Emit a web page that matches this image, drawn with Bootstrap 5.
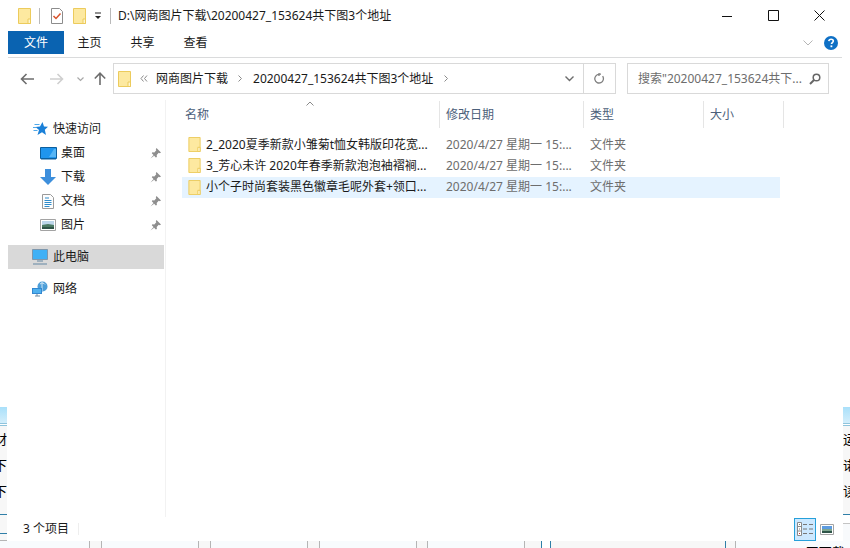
<!DOCTYPE html>
<html lang="zh-CN">
<head>
  <meta charset="UTF-8">
  <title>20200427_153624共下图3个地址</title>
  <link href="https://cdn.jsdelivr.net/npm/bootstrap@5.3.3/dist/css/bootstrap.min.css" rel="stylesheet">
  <style>
    html, body { width: 850px; height: 548px; overflow: hidden; background: #fff; }
    body { font: 12px/16px "Noto Sans", "Noto Sans CJK SC", sans-serif; color: #1a1a1a; }
    svg { display: block; flex: none; }

    .gap-l-4 { margin-left: 4px; }
    .gap-l-5 { margin-left: 5px; }
    .gap-l-7 { margin-left: 7px; }
    .gap-l-8 { margin-left: 8px; }
    .gap-l-9 { margin-left: 9px; }
    .gap-l-10 { margin-left: 10px; }
    .gap-l-11 { margin-left: 11px; }

    .shell { height: 541px; }
    .edge { width: 7px; flex: none; overflow: hidden; }
    .edge-top { height: 407px; background: #fff; }
    .edge-glow { height: 16px; background: linear-gradient(#a9e0fa, #d4eefb); }
    .edge-rule { height: 3px; background: #fff; border-top: 1px solid #8fc4dc; border-bottom: 1px solid #8fc4dc; }
    .edge-body { height: 88px; background: #f7f7f7; font-size: 13px; color: #000; white-space: nowrap; }
    .edge-body div { height: 26px; padding-top: 5px; }
    .edge-left .edge-body div { direction: rtl; }
    .edge-foot-l { height: 19px; background: #f7f7f7; border-top: 1px solid #2f7fa8; }
    .edge-foot-l2 { height: 8px; background: #f7f7f7; border-top: 1px solid #2f7fa8; border-bottom: 1px solid #b5b5b5; }
    .edge-foot-r { height: 9px; background: #fff; border-top: 1px solid #2f7fa8; }
    .edge-foot-r2 { height: 18px; background: #f8fafc; border-top: 1px solid #c4c4c4; }

    .win { width: 836px; flex: none; background: #fff; }
    .titlebar { height: 31px; }
    .bar-sep { width: 1px; height: 16px; background: #b9b9b9; }
    .win-btns { margin-right: 1px; }
    .win-btn { width: 46px; height: 31px; }

    .ribbon { height: 27px; margin: 0 1px; border-bottom: 1px solid #dadbdc; }
    .file-tab { width: 56px; height: 23px; margin-bottom: 3px; background: #0a63b1; color: #fff; }
    .rib-tab { width: 53px; height: 23px; margin: 0 0 3px -1px; text-align: center; line-height: 23px; }
    .rib-tab-first { margin-left: -1px; }
    .rib-fold { margin: 0 11px 3px auto; }
    .rib-help { margin: 0 4px 3px 0; }

    .addr { height: 42px; padding-top: 5px; }
    .addr-box { height: 31px; border: 1px solid #d9d9d9; }
    .path { width: 503px; margin-left: 7px; }
    .find { width: 202px; margin-left: 11px; color: #6d6d6d; }
    .addr-sep { width: 1px; height: 29px; background: #d9d9d9; }
    .go-back { margin: 10px 0 0 13px; }
    .go-next { margin: 10px 0 0 16px; }
    .go-list { margin: 14px 0 0 13px; }
    .go-up { margin: 9px 0 0 10px; }
    .path-fold { margin-right: 9px; }
    .path-refresh { margin: 0 10px; }
    .find-glass { margin-right: 7px; }

    .mainpane { height: 417px; }
    .sidenav { width: 159px; padding-top: 17px; border-right: 1px solid #f2f2f2; margin-right: 16px; flex: none; }
    .nav-row { height: 24px; margin-left: 1px; width: 156px; }
    .nav-on { background: #d9d9d9; margin-top: 8px; }
    .nav-net { margin-top: 8px; }
    .ico-star { margin-left: 25px; }
    .ico-desk { margin-left: 32px; }
    .ico-doc { margin-left: 34px; }
    .ico-top { margin-left: 24px; }
    .nav-pin { margin: 0 3px 0 auto; }

    .heads { height: 27px; margin-top: 1px; color: #4c607a; }
    .cell-name { width: 256px; flex: none; }
    .cell-date { width: 144px; flex: none; }
    .cell-type { width: 120px; flex: none; }
    .cell-size { width: 80px; flex: none; }
    .heads > div { height: 27px; line-height: 28px; border-right: 1px solid #e5e5e5; padding-left: 6px; position: relative; }
    .heads .cell-name { padding-left: 3px; width: 258px; }
    .sort-mark { position: absolute; left: 124px; top: 0; }
    .filelist { margin-top: 6px; width: 598px; }
    .file-row { height: 21.33px; line-height: 20px; }
    .file-row .cell-name { padding-left: 6px; white-space: nowrap; overflow: hidden; }
    .file-row .cell-date, .file-row .cell-type { color: #6d6d6d; padding-left: 8px; white-space: nowrap; }
    .file-ico { margin-right: 5px; }
    .file-on { background: #e5f3ff; }

    .statusbar { height: 24px; }
    .status-text { margin-left: 16px; }
    .status-sep { width: 1px; height: 12px; background: #eee; margin-left: 9px; }
    .view-on { width: 22px; height: 23px; margin-left: auto; background: #cce8ff; border: 1px solid #26a0da; }
    .view-big { margin: 0 9px 0 4px; }

    .band { height: 7px; background: #f8fbfd; overflow: hidden; }
    .band-space { flex: none; height: 7px; }
    .w-89 { width: 89px; }
    .w-96 { width: 96px; }
    .w-52 { width: 8px; background: #fff; }
    .w-175 { width: 175px; background: #f7f7f7; border-left: 1px solid #2f7fa8; }
    .band-gap { height: 7px; width: 13px; background: #f7f7f7; border-left: 1px solid #b5b5b5; border-right: 1px solid #b5b5b5; flex: none; }
    .band-gap-12 { width: 12px; }
    .band-gap-18 { width: 18px; border-right-color: #2f7fa8; }
    .band-gap-11 { width: 11px; border-left-color: #2f7fa8; }
    .band-text { font-size: 13px; line-height: 16px; margin-left: 59px; padding-top: 3px; color: #000; white-space: nowrap; }
  </style>
</head>
<body>
  <svg width="0" height="0" class="position-absolute">
    <symbol id="folder" viewBox="0 0 13 16">
      <path d="M.5.5h12v15H.5z" fill="#fde9a0" stroke="#eccb5c"/>
      <path d="M10 11h2.5v4.500H10z" fill="#fff6d0" stroke="#eccb5c"/>
    </symbol>
    <symbol id="pin" viewBox="0 0 11 11">
      <path d="M6.500 0 11 4.500 9.800 5.200 8.700 4.800 6.700 7 6.900 9 5.800 9.500 1.800 5.300 2.400 4.300 4.300 4.400 6.300 2.300 5.800 1.200z" fill="#8e8e8e"/>
      <path d="M3.500 7 .5 10.500 4.200 7.800z" fill="#8e8e8e"/>
    </symbol>
  </svg>

  <div class="shell d-flex">
    <div class="edge edge-left">
      <div class="edge-top"></div>
      <div class="edge-glow"></div>
      <div class="edge-rule"></div>
      <div class="edge-body"><div>材</div><div>下</div><div>下</div></div>
      <div class="edge-foot-l"></div>
      <div class="edge-foot-l2"></div>
    </div>

    <div class="win d-flex flex-column">
      <div class="titlebar d-flex align-items-center">
        <svg width="13" height="16" class="gap-l-11"><use href="#folder"/></svg>
        <div class="bar-sep gap-l-8"></div>
        <svg width="12" height="16" viewBox="0 0 12 16" class="gap-l-11">
          <path d="M.5.500h8l3 3v12H.5z" fill="#fff" stroke="#8c8c8c"/>
          <path d="M2.500 8 5 10.500 9.500 5.500" fill="none" stroke="#d9532c" stroke-width="1.500"/>
        </svg>
        <svg width="13" height="16" class="gap-l-10"><use href="#folder"/></svg>
        <svg width="8" height="8" viewBox="0 0 8 8" class="gap-l-8">
          <path d="M1 1h6" stroke="#222"/><path d="M1 4h6L4 7z" fill="#222"/>
        </svg>
        <div class="bar-sep gap-l-8"></div>
        <div class="flex-grow-1 gap-l-7">D:\网商图片下载\20200427_153624共下图3个地址</div>
        <div class="d-flex win-btns">
          <div class="win-btn d-flex align-items-center justify-content-center">
            <svg width="10" height="10" viewBox="0 0 10 10"><path d="M0 5.500h10" stroke="#111"/></svg>
          </div>
          <div class="win-btn d-flex align-items-center justify-content-center">
            <svg width="11" height="11" viewBox="0 0 11 11"><path d="M.5.500h10v10H.5z" fill="none" stroke="#111"/></svg>
          </div>
          <div class="win-btn d-flex align-items-center justify-content-center">
            <svg width="11" height="11" viewBox="0 0 11 11"><path d="M.5.500l10 10M10.500.500l-10 10" stroke="#111"/></svg>
          </div>
        </div>
      </div>

      <div class="ribbon d-flex align-items-center">
        <div class="file-tab d-flex align-items-center justify-content-center">文件</div>
        <div class="rib-tab rib-tab-first">主页</div>
        <div class="rib-tab ms-0">共享</div>
        <div class="rib-tab ms-0">查看</div>
        <svg width="10" height="6" viewBox="0 0 10 6" class="rib-fold"><path d="M.5.500 5 5 9.500.500" fill="none" stroke="#b5b5b5"/></svg>
        <svg width="14" height="14" viewBox="0 0 14 14" class="rib-help">
          <circle cx="7" cy="7" r="7" fill="#0f70c5"/>
          <path d="M4.800 5.200C5 3.800 6 3.200 7.100 3.200c1.300 0 2.200.8 2.200 1.900 0 1.500-1.800 1.600-1.800 3" fill="none" stroke="#fff" stroke-width="1.600"/>
          <rect x="6.500" y="9.400" width="1.800" height="1.800" fill="#fff"/>
        </svg>
      </div>

      <div class="addr d-flex">
        <svg width="14" height="12" viewBox="0 0 14 12" class="go-back"><path d="M14 6H2M6.500 1 1.500 6l5 5" fill="none" stroke="#6d6d6d" stroke-width="1.600"/></svg>
        <svg width="14" height="12" viewBox="0 0 14 12" class="go-next"><path d="M0 6h12M7.500 1l5 5-5 5" fill="none" stroke="#cfcfcf" stroke-width="1.600"/></svg>
        <svg width="7" height="5" viewBox="0 0 7 5" class="go-list"><path d="M.5.500 3.500 3.500 6.500.500" fill="none" stroke="#a8a8a8" stroke-width="1.200"/></svg>
        <svg width="12" height="13" viewBox="0 0 12 13" class="go-up"><path d="M6 13V2M.8 6.500 6 1.200l5.200 5.300" fill="none" stroke="#6d6d6d" stroke-width="1.600"/></svg>
        <div class="addr-box path d-flex align-items-center">
          <svg width="13" height="16" class="gap-l-4"><use href="#folder"/></svg>
          <svg width="8" height="7" viewBox="0 0 8 7" class="gap-l-9"><path d="M3.500.500 1 3.500l2.500 3M7 .500 4.500 3.500 7 6.500" fill="none" stroke="#8a8a8a"/></svg>
          <span class="gap-l-8">网商图片下载</span>
          <svg width="4" height="7" viewBox="0 0 4 7" class="gap-l-10"><path d="M.5.500l3 3-3 3" fill="none" stroke="#8a8a8a"/></svg>
          <span class="gap-l-11">20200427_153624共下图3个地址</span>
          <svg width="4" height="7" viewBox="0 0 4 7" class="gap-l-11"><path d="M.5.500l3 3-3 3" fill="none" stroke="#8a8a8a"/></svg>
          <svg width="9" height="6" viewBox="0 0 9 6" class="ms-auto path-fold"><path d="M.5.500 4.500 4.500 8.500.500" fill="none" stroke="#6d6d6d" stroke-width="1.400"/></svg>
          <div class="addr-sep"></div>
          <svg width="11" height="12" viewBox="0 0 11 12" class="path-refresh"><path d="M5 1.200h2M8.600 3.200a4.300 4.300 0 1 1-3.600-1.800M5 0v3" fill="none" stroke="#808080" stroke-width="1.300"/></svg>
        </div>
        <div class="addr-box find d-flex align-items-center">
          <span class="gap-l-10">搜索"20200427_153624共下...</span>
          <svg width="12" height="12" viewBox="0 0 12 12" class="ms-auto find-glass"><circle cx="7.500" cy="4.500" r="3.300" fill="none" stroke="#666" stroke-width="1.500"/><path d="M5 7 1 11" stroke="#666" stroke-width="2"/></svg>
        </div>
      </div>

      <div class="mainpane d-flex">
        <div class="sidenav">
          <div class="nav-row d-flex align-items-center">
            <svg width="15" height="14" viewBox="0 0 15 14" class="ico-star">
              <path d="M9.500 0 11 4.500l4 .3-3.200 2.900L13 13 9 10.200 4.500 13 6 8 2.500 5l4.500-.5z" fill="#1a80d8"/>
              <path d="M1.500 2.500h5M0 5.500h3M.5 8.500h4" stroke="#4fa8ea"/>
            </svg>
            <span class="gap-l-5">快速访问</span>
          </div>
          <div class="nav-row d-flex align-items-center">
            <svg width="17" height="13" viewBox="0 0 17 13" class="ico-desk">
              <path d="M.5.500h16v11H.5z" fill="#1f95ee" stroke="#0c5f9e"/>
              <path d="M1 11h15v1.500H1z" fill="#0c5f9e"/><path d="M9 10 14 2h2v8z" fill="#56b5f5"/>
            </svg>
            <span class="gap-l-4">桌面</span>
            <svg width="11" height="11" class="nav-pin"><use href="#pin"/></svg>
          </div>
          <div class="nav-row d-flex align-items-center">
            <svg width="16" height="16" viewBox="0 0 16 16" class="ico-desk">
              <path d="M5 0h6v8h5l-8 8-8-8h5z" fill="#3d8fdc"/>
            </svg>
            <span class="gap-l-5">下载</span>
            <svg width="11" height="11" class="nav-pin"><use href="#pin"/></svg>
          </div>
          <div class="nav-row d-flex align-items-center">
            <svg width="12" height="15" viewBox="0 0 12 15" class="ico-doc">
              <path d="M.5.500h8l3 3v11H.5z" fill="#fdfdfd" stroke="#9a9a9a"/>
              <path d="M3 4h4M2.500 6.500h7M2.500 8.500h7M2.500 10.500h7M2.500 12.500h5" stroke="#2f8ccb"/>
            </svg>
            <span class="gap-l-7">文档</span>
            <svg width="11" height="11" class="nav-pin"><use href="#pin"/></svg>
          </div>
          <div class="nav-row d-flex align-items-center">
            <svg width="16" height="12" viewBox="0 0 16 12" class="ico-desk">
              <path d="M.5.500h15v11H.5z" fill="#fff" stroke="#a3a3a3"/>
              <path d="M2 2h12v4H2z" fill="#bcd6ea"/><path d="M2 6 8 5l6 1v4H2z" fill="#4b7a63"/><path d="M2 8h12v2H2z" fill="#2e5448"/>
            </svg>
            <span class="gap-l-5">图片</span>
            <svg width="11" height="11" class="nav-pin"><use href="#pin"/></svg>
          </div>
          <div class="nav-row nav-on d-flex align-items-center">
            <svg width="16" height="16" viewBox="0 0 16 16" class="ico-top">
              <path d="M.5.500h15v10H.5z" fill="#3fb0f5" stroke="#7d97ad"/>
              <path d="M5 12h6M1 15h14" stroke="#8aa2b5" stroke-width="1.500"/>
            </svg>
            <span class="gap-l-5">此电脑</span>
          </div>
          <div class="nav-row nav-net d-flex align-items-center">
            <svg width="16" height="16" viewBox="0 0 16 16" class="ico-top">
              <circle cx="10.500" cy="5.500" r="5" fill="#4d9ed8"/>
              <path d="M8 3c2-1.500 4-1 5 .5M10 1v9" stroke="#cfe7f7" fill="none"/>
              <path d="M0 7h10v6H0z" fill="#3387cf"/>
              <path d="M1 8h8v4H1z" fill="#4fb0ee"/><path d="M3 15h5M5 13v2" stroke="#6f8aa0"/>
            </svg>
            <span class="gap-l-5">网络</span>
          </div>
        </div>

        <div class="flex-grow-1">
          <div class="heads d-flex">
            <div class="cell-name">名称
              <svg width="8" height="5" viewBox="0 0 8 5" class="sort-mark"><path d="M.5 4.500 4 1l3.500 3.500" fill="none" stroke="#8a8a8a"/></svg>
            </div>
            <div class="cell-date">修改日期</div>
            <div class="cell-type">类型</div>
            <div class="cell-size">大小</div>
          </div>
          <div class="filelist">
            <div class="file-row d-flex align-items-center">
              <div class="cell-name d-flex align-items-center"><svg width="13" height="15" class="file-ico"><use href="#folder"/></svg>2_2020夏季新款小雏菊t恤女韩版印花宽...</div>
              <div class="cell-date">2020/4/27 星期一 15:...</div>
              <div class="cell-type">文件夹</div>
            </div>
            <div class="file-row d-flex align-items-center">
              <div class="cell-name d-flex align-items-center"><svg width="13" height="15" class="file-ico"><use href="#folder"/></svg>3_芳心未许 2020年春季新款泡泡袖褶裥...</div>
              <div class="cell-date">2020/4/27 星期一 15:...</div>
              <div class="cell-type">文件夹</div>
            </div>
            <div class="file-row file-on d-flex align-items-center">
              <div class="cell-name d-flex align-items-center"><svg width="13" height="15" class="file-ico"><use href="#folder"/></svg>小个子时尚套装黑色徽章毛呢外套+领口...</div>
              <div class="cell-date">2020/4/27 星期一 15:...</div>
              <div class="cell-type">文件夹</div>
            </div>
          </div>
        </div>
      </div>

      <div class="statusbar d-flex align-items-center">
        <span class="status-text">3 个项目</span>
        <div class="status-sep"></div>
        <div class="view-on d-flex align-items-center justify-content-center">
          <svg width="16" height="14" viewBox="0 0 16 14">
            <path d="M.5.500h4v13h-4z" fill="#fff" stroke="#8a8a8a"/>
            <path d="M1 4.500h3M1 9h3" stroke="#8a8a8a"/>
            <path d="M6 2.500h4M12 2.500h4M6 7h4M12 7h4M6 11.500h4M12 11.500h4" stroke="#777"/>
            <path d="M2 2h1v1H2zM2 6.500h1v1H2z" fill="#7a7a7a"/><path d="M2 11h1v1H2z" fill="#c33"/>
          </svg>
        </div>
        <svg width="14" height="11" viewBox="0 0 14 11" class="view-big">
          <path d="M.5.500h13v10H.5z" fill="#fff" stroke="#a3a3a3"/>
          <path d="M2 2h10v3H2z" fill="#5c9be0"/><path d="M2 5h10v2H2z" fill="#7fa68f"/><path d="M2 7h10v2H2z" fill="#2e5448"/>
        </svg>
      </div>
    </div>

    <div class="edge">
      <div class="edge-top"></div>
      <div class="edge-glow"></div>
      <div class="edge-rule"></div>
      <div class="edge-body"><div>运</div><div>诺</div><div>读</div></div>
      <div class="edge-foot-r"></div>
      <div class="edge-foot-r2"></div>
    </div>
  </div>

  <div class="band d-flex">
    <div class="band-space w-89"></div>
    <div class="band-gap"></div>
    <div class="band-space w-96"></div>
    <div class="band-gap"></div>
    <div class="band-space w-96"></div>
    <div class="band-gap"></div>
    <div class="band-space w-96"></div>
    <div class="band-gap band-gap-12"></div>
    <div class="band-space w-96"></div>
    <div class="band-gap band-gap-18"></div>
    <div class="band-space w-52"></div>
    <div class="band-space w-175"></div>
    <div class="band-gap band-gap-11"></div>
    <div class="band-text">&gt; 网下载</div>
  </div>
</body>
</html>
